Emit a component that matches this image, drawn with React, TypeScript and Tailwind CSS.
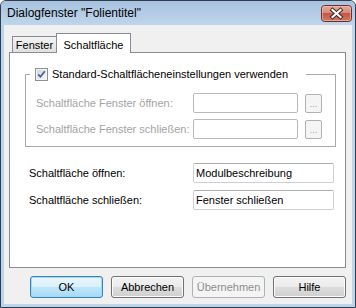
import type { ReactNode } from "react";

const font = "font-['Liberation_Sans',Arial,sans-serif]";

function CloseButton() {
  return (
    <svg width="31" height="17" viewBox="0 0 31 17" className="shrink-0">
      <defs>
        <linearGradient id="closeBg" x1="0" y1="0" x2="0" y2="1">
          <stop offset="0" stopColor="#e8a99c" />
          <stop offset="0.45" stopColor="#d98b7b" />
          <stop offset="0.5" stopColor="#c75744" />
          <stop offset="1" stopColor="#d07a68" />
        </linearGradient>
      </defs>
      <rect x="0.5" y="0.5" width="30" height="16" rx="3" fill="url(#closeBg)" stroke="#6f2f28" />
      <rect x="1.5" y="1.5" width="28" height="14" rx="2" fill="none" stroke="#f1c3b9" strokeOpacity="0.6" />
      <path d="M11.5 5 L19.5 12 M19.5 5 L11.5 12" stroke="#3b2420" strokeWidth="4" strokeLinecap="square" />
      <path d="M11.5 5 L19.5 12 M19.5 5 L11.5 12" stroke="#ffffff" strokeWidth="2.2" strokeLinecap="square" />
    </svg>
  );
}

function Checkbox() {
  return (
    <svg width="13" height="13" viewBox="0 0 13 13" className="shrink-0">
      <defs>
        <linearGradient id="cbFill" x1="0" y1="0" x2="1" y2="1">
          <stop offset="0" stopColor="#cdd5df" />
          <stop offset="1" stopColor="#f6f7f9" />
        </linearGradient>
      </defs>
      <rect x="0.5" y="0.5" width="12" height="12" fill="#f4f4f4" stroke="#8e8f8f" />
      <rect x="2" y="2" width="9" height="9" fill="url(#cbFill)" />
      <path d="M3.2 6.4 L5.4 8.8 L9.8 3.2" fill="none" stroke="#4b5f8e" strokeWidth="1.7" />
    </svg>
  );
}

function DialogButton({
  children,
  variant = "normal",
}: {
  children: ReactNode;
  variant?: "normal" | "primary" | "disabled";
}) {
  return (
    <button
      type="button"
      className={[
        "flex h-[22px] w-[73px] items-center justify-center rounded-[3px] border text-[11px]",
        variant === "primary"
          ? "border-[#3c7fb1] bg-[linear-gradient(#eaf6fd_0%,#d9f0fc_50%,#bee6fd_50%,#a7d9f5_100%)] text-black shadow-[inset_0_0_0_1px_#9fdcf8]"
          : variant === "disabled"
            ? "border-[#adb2b5] bg-[#f4f4f4] text-[#8d8d8d]"
            : "border-[#707070] bg-[linear-gradient(#f2f2f2_0%,#ebebeb_50%,#dddddd_50%,#cfcfcf_100%)] text-black shadow-[inset_0_0_0_1px_#fcfcfc]",
      ].join(" ")}
    >
      {children}
    </button>
  );
}

export default function App() {
  return (
    <div
      className={`${font} flex h-[308px] w-[356px] flex-col overflow-hidden rounded-t-[6px] border border-[#2d3c4e] bg-[#bcd4ec] text-[11px] text-black`}
    >
      {/* title bar */}
      <div className="flex h-[24px] shrink-0 items-start bg-[linear-gradient(#a8c2de,#bfd5ec)] pl-[6px] pr-[3px]">
        <span className="mt-[5px] text-[12px] leading-[14px]">
          Dialogfenster "Folientitel"
        </span>
        <div className="ml-auto mt-[4px]">
          <CloseButton />
        </div>
      </div>

      <div className="mx-[3px] mb-[3px] flex flex-1 flex-col bg-[#f0f0f0] pl-[5px] pr-[6px] pt-[8px]">
        {/* tabs */}
        <div className="flex items-end pl-[3px]">
          <div className="flex h-[16px] w-[45px] items-center justify-center border border-b-0 border-[#898c95] bg-[linear-gradient(#f3f3f3,#e0e0e0)] pt-[1px]">
            Fenster
          </div>
          <div className="relative z-10 -mb-px -ml-px flex h-[20px] w-[75px] items-start justify-center border border-b-0 border-[#898c95] bg-white pt-[3px]">
            Schaltfläche
          </div>
        </div>

        <div className="flex h-[216px] flex-col border border-[#898c95] bg-white">
          <fieldset className="ml-[15px] mr-[9px] mt-[15px] border border-[#a9a9a9]">
            <legend className="ml-[4px] w-[276px]">
              <div className="flex h-[13px] items-center gap-[4px] bg-white pl-[5px]">
                <Checkbox />
                <span>Standard-Schaltflächeneinstellungen verwenden</span>
              </div>
            </legend>
            <div className="flex flex-col gap-[6px] pb-[7px] pl-[10px] pt-[12px] text-[#a3a3a3]">
              {["Schaltfläche Fenster öffnen:", "Schaltfläche Fenster schließen:"].map(
                (label) => (
                  <div key={label} className="flex h-[20px] items-center">
                    <span className="w-[157px] whitespace-nowrap">{label}</span>
                    <div className="h-[20px] w-[105px] rounded-[2px] border border-[#b9b9b9] bg-white" />
                    <div className="ml-[7px] flex h-[19px] w-[17px] items-end justify-center rounded-[2px] border border-[#adb2b5] bg-[#f4f4f4] pb-[3px] text-[9px] leading-none text-[#9a9a9a]">
                      ...
                    </div>
                  </div>
                )
              )}
            </div>
          </fieldset>

          <div className="ml-[19px] mt-[16px] flex flex-col gap-[7px]">
            {[
              ["Schaltfläche öffnen:", "Modulbeschreibung"],
              ["Schaltfläche schließen:", "Fenster schließen"],
            ].map(([label, value]) => (
              <div key={label} className="flex h-[20px] items-center">
                <span className="w-[164px] whitespace-nowrap">{label}</span>
                <input
                  readOnly
                  value={value}
                  className="h-[20px] w-[141px] rounded-[2px] border border-[#ccd0d6] border-t-[#abadb3] bg-white px-[2px] text-[11px] outline-none"
                />
              </div>
            ))}
          </div>
        </div>

        {/* dialog buttons */}
        <div className="mt-[8px] flex justify-end gap-[8px]">
          <DialogButton variant="primary">OK</DialogButton>
          <DialogButton>Abbrechen</DialogButton>
          <DialogButton variant="disabled">Übernehmen</DialogButton>
          <DialogButton>Hilfe</DialogButton>
        </div>
      </div>
    </div>
  );
}
